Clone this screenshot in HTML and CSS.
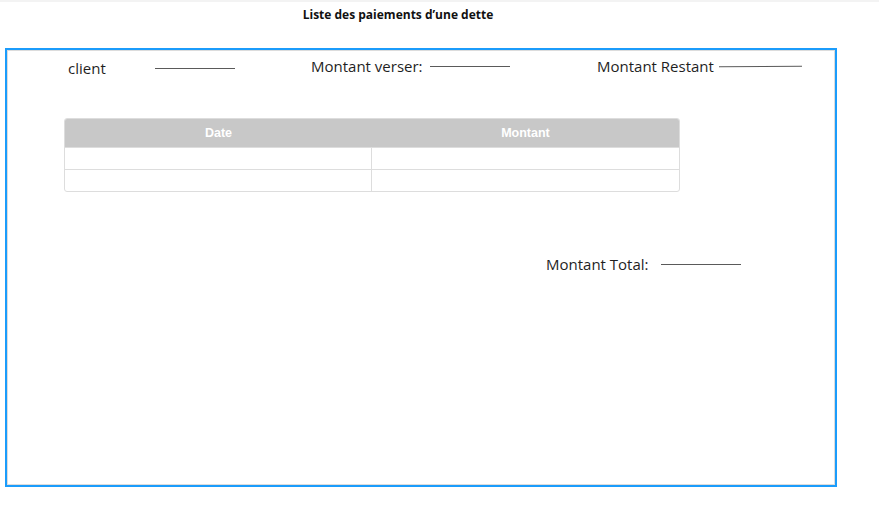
FILE: index.html
```html
<!DOCTYPE html>
<html lang="fr">
<head>
<meta charset="utf-8">
<title>Liste des paiements d’une dette</title>
<link rel="stylesheet" href="styles.css">
</head>
<body>
<div class="topbar"></div>
<h1 class="title">Liste des paiements d’une dette</h1>
<div class="frame">
  <div class="info-row">
    <div class="field field-client">
      <span class="label label-client">client</span>
      <span class="rule rule-client"></span>
    </div>
    <div class="field field-verse">
      <span class="label label-verse">Montant verser:</span>
      <span class="rule rule-verse"></span>
    </div>
    <div class="field field-restant">
      <span class="label label-restant">Montant Restant</span>
      <span class="rule rule-restant"></span>
    </div>
  </div>
  <table class="pay-table">
    <thead>
      <tr><th>Date</th><th>Montant</th></tr>
    </thead>
    <tbody>
      <tr><td></td><td></td></tr>
      <tr><td></td><td></td></tr>
    </tbody>
  </table>
  <div class="total-row">
    <span class="label label-total">Montant Total:</span>
    <span class="rule rule-total"></span>
  </div>
</div>
</body>
</html>
```
FILE: styles.css
```css
* { box-sizing: border-box; }
html, body { margin: 0; padding: 0; background: #ffffff; }
body {
  width: 879px;
  height: 528px;
  overflow: hidden;
  font-family: "Open Sans", "Noto Sans", sans-serif;
  color: #1f1f1f;
}
.topbar {
  height: 2px;
  background: #f3f3f3;
}
.title {
  margin: 0;
  height: 26px;
  line-height: 26px;
  text-align: center;
  font-size: 12px;
  font-weight: 700;
  color: #111;
  padding-right: 83px;
}
.frame {
  margin-top: 20px;
  margin-left: 5px;
  width: 832px;
  height: 439px;
  border: 2px solid #1b9cfb;
  box-shadow: inset 0 0 0 1px #dcdcdc;
  padding-top: 6px;
}
.info-row {
  display: flex;
  align-items: flex-start;
  padding-left: 61px;
}
.field {
  display: flex;
  align-items: center;
  height: 20px;
}
.label {
  display: inline-block;
  font-size: 15px;
  line-height: 20px;
  white-space: nowrap;
}
.label-client { width: 87px; }
.label-verse { width: 119px; }
.label-restant { width: 122px; }
.label-total { width: 115px; }
.rule {
  display: inline-block;
  height: 1px;
  background: #5a5a5a;
}
.field-client { margin-top: 2px; }
.rule-client { width: 80px; margin-top: 1px; }
.field-verse { margin-left: 76px; }
.rule-verse { width: 80px; margin-top: 1px; }
.field-restant { margin-left: 87px; }
.rule-restant { width: 83px; margin-top: 1px; transform: rotate(-0.4deg); }

.pay-table {
  margin-top: 40px;
  margin-left: 57px;
  width: 616px;
  border-collapse: separate;
  border-spacing: 0;
  border: 1px solid #dddddd;
  border-radius: 3px;
  overflow: hidden;
  font-family: "Liberation Sans", Arial, sans-serif;
}
.pay-table th {
  background: #c8c8c8;
  color: #ffffff;
  font-size: 12.5px;
  font-weight: 700;
  height: 28px;
  padding: 0;
  text-align: center;
}
.pay-table td {
  height: 22px;
  padding: 0;
  border-top: 1px solid #dddddd;
}
.pay-table th:first-child,
.pay-table td:first-child {
  width: 307px;
}
.pay-table td:first-child {
  border-right: 1px solid #dddddd;
}
.total-row {
  display: flex;
  align-items: center;
  margin-top: 62px;
  padding-left: 539px;
}
.rule-total { width: 80px; margin-top: 1px; }
```
